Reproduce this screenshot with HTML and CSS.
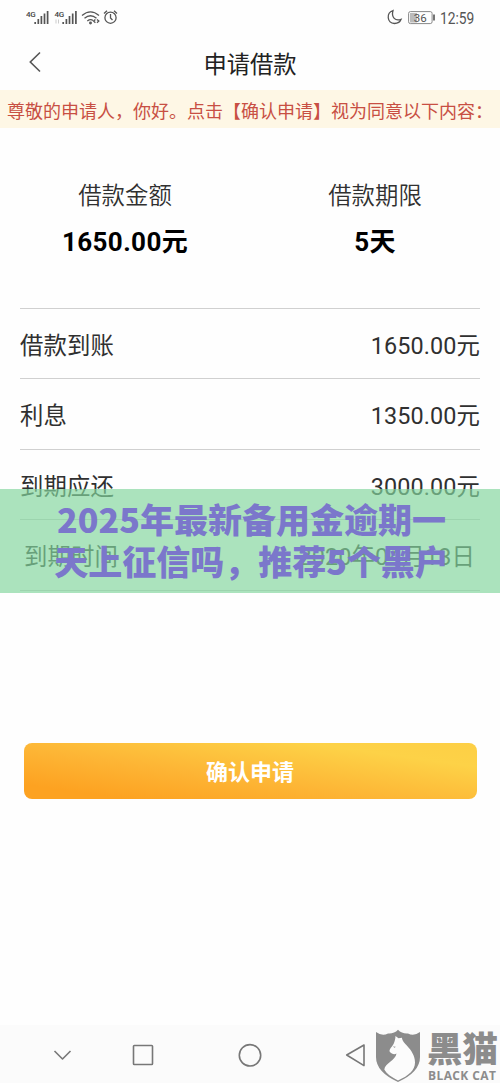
FILE: index.html
```html
<!DOCTYPE html>
<html lang="zh-CN">
<head>
<meta charset="utf-8">
<title>申请借款</title>
<link rel="stylesheet" href="styles.css">
</head>
<body>
<div class="screen">
  <div class="status">
    <svg class="status-left" width="96" height="20" viewBox="0 0 96 20">
      <g class="net"><text x="0" y="8.500">4G</text><text x="28.5" y="8.500">4G</text></g>
      <g class="bars"><path d="M9.2 16v-2M12.3 16v-5M15.4 16v-8M18.5 16V5.500M21.6 16V3M37.200 16v-2M40.400 16v-5M43.500 16v-8M46.700 16V5.500M49.900 16V3"/></g>
      <path class="faint" d="M30 11.500v4M32.500 11.500v4"/>
      <g class="line"><path d="M56 7.500Q64.500 .2 73 7.500M58.500 10.300Q64.500 5.200 70.500 10.300M61.300 13Q64.500 10.600 67 12.500"/><path d="M71 11.500l1.800 1.600-1.800 1.600M69.400 11.500l-1.800 1.600 1.800 1.600"/><circle cx="64.500" cy="15" r=".8"/></g>
      <g class="line"><circle cx="84.500" cy="9.700" r="5.600"/><path d="M84.500 6v4l2 2M78 5.500l3-2.700M91 5.500l-3-2.700"/></g>
    </svg>
    <div class="status-right">
      <svg class="moon" width="16" height="16" viewBox="0 0 16 16"><path class="line" d="M6 1.500C-1 4-.2 14 7.500 14.500c3.200 0 5.600-1.600 6.600-4.200C8.500 12.500 4 8.500 6 1.500z"/></svg>
      <svg class="battery" width="28" height="14" viewBox="0 0 28 14"><rect class="charge" x="2" y="2" width="7" height="9.500"/><rect class="cell" x=".6" y=".6" width="23.500" height="12" rx="1.800"/><path class="tip" d="M26 3.500v6"/><text class="level" x="12.300" y="10.800">36</text></svg>
      <span class="clock">12:59</span>
    </div>
  </div>
  <header class="header">
    <svg class="back" width="14" height="22" viewBox="0 0 14 22"><path d="M12 1.500L2.300 11l9.700 9.500"/></svg>
    <h1 class="title">申请借款</h1>
  </header>
  <p class="notice">尊敬的申请人，你好。点击【确认申请】视为同意以下内容：</p>
  <section class="summary">
    <div class="sum-item"><span class="sum-label">借款金额</span><strong class="sum-value">1650.00元</strong></div>
    <div class="sum-item"><span class="sum-label">借款期限</span><strong class="sum-value">5天</strong></div>
  </section>
  <div class="rows">
    <div class="row"><span>借款到账</span><span>1650.00元</span></div>
    <div class="row"><span>利息</span><span>1350.00元</span></div>
    <div class="row"><span>到期应还</span><span>3000.00元</span></div>
    <div class="row row-date"><span>到期时间</span><span>2020年04月13日</span></div>
  </div>
  <button class="confirm">确认申请</button>
  <nav class="navbar">
    <svg class="nav-icons" width="500" height="58" viewBox="0 0 500 58"><path d="M54.500 26l8 8 8-8"/><rect x="133.500" y="20.500" width="19" height="19" rx=".8"/><circle cx="250" cy="30.300" r="10.700"/><path d="M346.700 30l17.300-10v20.600z"/></svg>
  </nav>
  <div class="banner"><span>2025年最新备用金逾期一</span><span>天上征信吗，推荐5个黑户</span></div>
  <div class="watermark">
    <svg class="shield" width="46" height="54" viewBox="0 0 46 54">
      <path class="shield-body" d="M1 3Q7 7.500 13 4.500Q19 5 23 .8Q27 5 33 4.500Q39 7.500 45 3V28Q45 43 23 53Q1 43 1 28z"/>
      <path class="shield-cat" d="M20.500 7l3 2.300 3.300-.6c.6 3.300 2.700 5.300 5 7.800 4.600 5 8.200 10.500 8.200 17C40 41 34 46.500 23 51.500 16 48 11.500 44.500 9.300 40.500 10 34 20.500 31.500 21.500 24.500c-2.300 1.500-4.800.3-6.800-1.700-.7-1.700.8-3.400 1.800-4.700 1.800-2.300 3.600-5 4-11.100z"/>
      <path class="shield-eye" d="M17.800 17.500l3 .2-1.200 1z"/>
    </svg>
    <div class="brand"><span class="brand-cn">黑猫</span><span class="brand-en">BLACK CAT</span></div>
  </div>
</div>
</body>
</html>
```

FILE: styles.css
```css
* { box-sizing: border-box; }
body { margin: 0; background: #fefefe; color: #303030; font-family: Roboto, "Noto Sans CJK SC", sans-serif; }
.screen { position: relative; width: 500px; height: 1083px; overflow: hidden; display: flex; flex-direction: column; }
.status { height: 36px; display: flex; justify-content: space-between; padding: 8px 24px 0 26px; }
.status-left { display: block; }
.status-right { display: flex; gap: 6px; align-items: flex-start; }
.net { font-size: 8px; font-weight: 500; fill: #444; letter-spacing: -.4px; }
.bars { stroke: #555; stroke-width: 1.700; }
.faint { stroke: #ccc; }
.line { fill: none; stroke: #555; stroke-width: 1.300; }
.moon { margin: 1px -1px 0 0; }
.battery { margin: 3px 0 0; }
.cell { fill: none; stroke: #888; }
.charge { fill: #bbb; }
.tip { stroke: #666; stroke-width: 1.800; }
.level { font-size: 11.500px; text-anchor: middle; fill: #555; }
.clock { width: 36px; margin-left: -2px; font-size: 17px; line-height: 20px; color: #555; white-space: nowrap; transform: scaleX(.81); transform-origin: left; }
.header { height: 54px; display: grid; grid-template-columns: 60px 1fr 60px; padding-top: 7px; }
.back { margin: 8px 0 0 28px; fill: none; stroke: #555; stroke-width: 1.600; }
.title { margin: 0; text-align: center; font-size: 23.300px; font-weight: 400; line-height: 45px; color: #222; }
.notice { margin: 0; height: 38px; padding-left: 7px; background: #fef7e5; color: #c84f43; font-size: 18px; line-height: 43px; white-space: nowrap; }
.summary { height: 180px; display: grid; grid-template-columns: 1fr 1fr; padding-top: 48px; }
.sum-item { display: flex; flex-direction: column; align-items: center; }
.sum-label { font-size: 23.400px; line-height: 41px; font-weight: 350; }
.sum-value { margin-top: 5px; font-size: 26px; line-height: 40px; color: #000; letter-spacing: .4px; }
.rows { margin: 0 20px; }
.row { height: 70.400px; display: flex; justify-content: space-between; border-top: 1px solid #d0d0d0; padding-top: 2px; font-size: 23.400px; line-height: 70px; letter-spacing: .1px; }
.row-date { height: 71.400px; border-bottom: 1px solid #d0d0d0; padding: 2px 5px 0 4px; }
.confirm { margin: 152px 23.500px 0; padding: 0 0 2px; height: 56px; border: 0; border-radius: 8px; background: linear-gradient(8deg, #fda221 12%, #fdb535 42%, #fdd247 80%, #fdcf45 100%); color: #fff; font: 700 22px/54px "Noto Sans CJK SC", sans-serif; }
.navbar { margin-top: auto; height: 58px; background: #fbfbfb; }
.nav-icons { display: block; fill: none; stroke: #777; stroke-width: 1.600; stroke-linejoin: round; }
.banner { position: absolute; left: 0; top: 489px; width: 500px; height: 104px; padding: 9px 0 0 3px; background: rgba(131, 214, 158, .68); color: #7b77cb; font: 900 34px/41.500px "Noto Sans CJK SC", sans-serif; display: flex; flex-direction: column; align-items: center; white-space: nowrap; }
.watermark { position: absolute; left: 375px; top: 1029px; display: flex; gap: 6px; color: #8c8c8c; }
.shield-body { fill: #8c8c8c; }
.shield-cat { fill: #fcfcfc; }
.shield-eye { fill: #8c8c8c; }
.brand { display: flex; flex-direction: column; white-space: nowrap; }
.brand-cn { font: 900 35.500px/36px "Noto Sans CJK SC", sans-serif; }
.brand-en { margin: 4px 0 0 1px; font: 700 12px/14px "Open Sans", sans-serif; letter-spacing: .4px; }
```
